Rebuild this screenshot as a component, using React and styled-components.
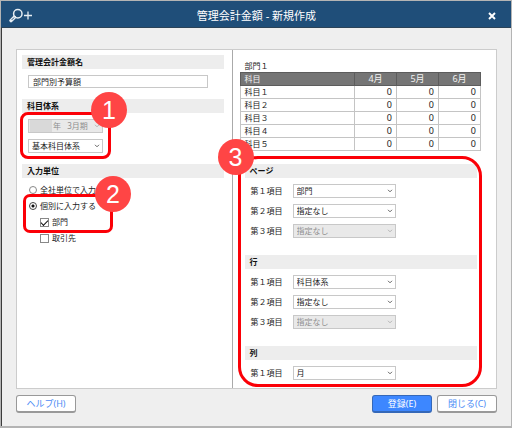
import React, { useState } from 'react';
import styled, { createGlobalStyle } from 'styled-components';

const GlobalStyle = createGlobalStyle`
  * {
    box-sizing: border-box;
  }

  body {
    margin: 0;
    background: #efefef;
  }

  body, input, select, button {
    font-family: 'Noto Sans', 'Noto Sans CJK JP', sans-serif;
    font-size: 8px;
    line-height: 12px;
    color: #222;
  }
`;

const months = ['4月', '5月', '6月'];
const accounts = ['科目１', '科目２', '科目３', '科目４', '科目５'];

const itemGroups = [
  {
    title: 'ページ',
    items: [
      { label: '第１項目', value: '部門' },
      { label: '第２項目', value: '指定なし' },
      { label: '第３項目', value: '指定なし', disabled: true },
    ],
  },
  {
    title: '行',
    items: [
      { label: '第１項目', value: '科目体系' },
      { label: '第２項目', value: '指定なし' },
      { label: '第３項目', value: '指定なし', disabled: true },
    ],
  },
  {
    title: '列',
    items: [{ label: '第１項目', value: '月' }],
  },
];

const SearchPlusIcon = () => (
  <svg width="24" height="16" viewBox="0 0 24 16" fill="none" aria-hidden="true">
    <circle cx="8.8" cy="5.8" r="4.2" stroke="#e6edf3" strokeWidth="1.5" />
    <path d="M5.4 9.2L2 12.6" stroke="#e6edf3" strokeWidth="3.4" strokeLinecap="round" />
    <path d="M4.8 9.8L3 11.6" stroke="#1f4e79" strokeWidth="1" strokeLinecap="round" />
    <path d="M15 7.5H23M19 3.5V11.5" stroke="#e6edf3" strokeWidth="1.3" />
  </svg>
);

const CloseIcon = () => (
  <svg width="8" height="8" viewBox="0 0 8 8" aria-hidden="true">
    <path d="M1 1L7 7M7 1L1 7" stroke="#fff" strokeWidth="1.9" />
  </svg>
);

const Dropdown = ({ id, value, disabled, label, masked }) => (
  <SelectBox>
    <Select id={id} disabled={disabled} aria-label={label} $masked={masked}>
      <option>{value}</option>
    </Select>
    {masked && <Mask />}
    <Chevron viewBox="0 0 6 4" $disabled={disabled}>
      <path d="M1 0.8L3 2.8L5 0.8" fill="none" stroke="currentColor" />
    </Chevron>
  </SelectBox>
);

const App = () => {
  const [name, setName] = useState('部門別予算額');
  const [unit, setUnit] = useState('each');
  const [byDivision, setByDivision] = useState(true);
  const [byClient, setByClient] = useState(false);

  return (
    <>
      <GlobalStyle />
      <Window>
        <TitleBar>
          <SearchPlusIcon />
          <Title>管理会計金額 - 新規作成</Title>
          <CloseButton type="button" aria-label="close">
            <CloseIcon />
          </CloseButton>
        </TitleBar>
        <Body>
          <Panels>
            <LeftPanel>
              <SectionTitle as="label" htmlFor="budget-name">管理会計金額名</SectionTitle>
              <NameInput id="budget-name" value={name} onChange={(e) => setName(e.target.value)} />

              <SectionTitle>科目体系</SectionTitle>
              <SystemGroup>
                <Dropdown value={'年\u00a0\u00a0\u00a03月期'} label="期" disabled masked />
                <Dropdown value="基本科目体系" label="科目体系" />
                <SystemRing />
                <SystemBadge>1</SystemBadge>
              </SystemGroup>

              <SectionTitle>入力単位</SectionTitle>
              <UnitGroup>
                <Choice>
                  <Radio name="unit" checked={unit === 'all'} onChange={() => setUnit('all')} />
                  全社単位で入力
                </Choice>
                <EachGroup>
                  <Choice>
                    <Radio name="unit" checked={unit === 'each'} onChange={() => setUnit('each')} />
                    個別に入力する
                  </Choice>
                  <Choice $nested>
                    <Check checked={byDivision} onChange={() => setByDivision(!byDivision)} />
                    部門
                  </Choice>
                  <EachRing />
                  <EachBadge>2</EachBadge>
                </EachGroup>
                <Choice $nested>
                  <Check checked={byClient} onChange={() => setByClient(!byClient)} />
                  取引先
                </Choice>
              </UnitGroup>
            </LeftPanel>

            <RightPanel>
              <Preview>
                <caption>部門１</caption>
                <thead>
                  <tr>
                    <th>科目</th>
                    {months.map((month) => <th key={month}>{month}</th>)}
                  </tr>
                </thead>
                <tbody>
                  {accounts.map((account) => (
                    <tr key={account}>
                      <td>{account}</td>
                      {months.map((month) => <td key={month}>0</td>)}
                    </tr>
                  ))}
                </tbody>
              </Preview>

              <ItemArea>
                {itemGroups.map((group, g) => (
                  <section key={group.title}>
                    <SectionTitle>{group.title}</SectionTitle>
                    <ItemRows>
                      {group.items.map((item, i) => (
                        <ItemRow key={item.label}>
                          <label htmlFor={`item-${g}-${i}`}>{item.label}</label>
                          <Dropdown id={`item-${g}-${i}`} value={item.value} disabled={item.disabled} />
                        </ItemRow>
                      ))}
                    </ItemRows>
                  </section>
                ))}
                <ItemRing />
                <ItemBadge>3</ItemBadge>
              </ItemArea>
            </RightPanel>
          </Panels>

          <Footer>
            <Button type="button">ヘルプ(H)</Button>
            <Actions>
              <Button type="button" $primary>登録(E)</Button>
              <Button type="button">閉じる(C)</Button>
            </Actions>
          </Footer>
        </Body>
      </Window>
    </>
  );
};

const Window = styled.div`
  display: flex;
  flex-direction: column;
  min-height: 100vh;
  border: 1px solid #b4b4b4;
  border-bottom-width: 2px;
  background: #efefef;
`;

const TitleBar = styled.header`
  display: grid;
  grid-template-columns: 24px 1fr 24px;
  align-items: center;
  height: 27px;
  padding: 3px 7px 0 8px;
  background: #1f4e79;
  border-bottom: 1px solid #2b4358;
`;

const Title = styled.h1`
  margin: 0;
  font-size: 11px;
  font-weight: 400;
  line-height: 16px;
  text-align: center;
  color: #fff;
`;

const CloseButton = styled.button`
  display: flex;
  justify-content: center;
  padding: 4px;
  border: 0;
  background: none;
`;

const Body = styled.main`
  display: flex;
  flex: 1;
  flex-direction: column;
  padding: 21px 14px 13px;
  border-left: 1px solid #3c3c3c;
`;

const Panels = styled.div`
  display: grid;
  flex: 1;
  grid-template-columns: 9fr 11fr;
  background: #fff;
  border: 1px solid #ccc;
`;

const LeftPanel = styled.section`
  display: flex;
  flex-direction: column;
  padding: 5px 8px 5px 5px;
  border-right: 1px solid #aaa;
`;

const RightPanel = styled.section`
  padding: 9px 15px 8px 7px;
`;

const SectionTitle = styled.h2`
  display: block;
  margin: 0;
  padding: 1px 5px;
  font-size: 8px;
  font-weight: 700;
  line-height: 12px;
  background: #ededed;
  color: #111;
`;

const NameInput = styled.input`
  width: 180px;
  height: 13px;
  margin: 6px 6px 11px;
  padding: 0 4px;
  border: 1px solid #c8c8c8;
  background: #fff;
`;

const SystemGroup = styled.div`
  position: relative;
  display: flex;
  flex-direction: column;
  gap: 6px;
  width: 75px;
  margin: 6px 6px 11px;
`;

const SelectBox = styled.div`
  position: relative;
`;

const Select = styled.select`
  display: block;
  appearance: none;
  width: 100%;
  height: 14px;
  padding: 0 12px 0 ${(p) => (p.$masked ? '24px' : '3px')};
  border: 1px solid #c8c8c8;
  border-radius: 0;
  background: #fff;

  &:disabled {
    background: #e9e9e9;
    color: #8f8f8f;
    opacity: 1;
  }
`;

const Mask = styled.span`
  position: absolute;
  top: 1px;
  bottom: 1px;
  left: 2px;
  width: 22px;
  background: #d9d9d9;
`;

const Chevron = styled.svg`
  position: absolute;
  top: 5px;
  right: 3px;
  width: 6px;
  height: 4px;
  color: ${(p) => (p.$disabled ? '#b5b5b5' : '#666')};
  pointer-events: none;
`;

const UnitGroup = styled.div`
  display: flex;
  flex-direction: column;
  align-items: flex-start;
  margin: 4px 7px;
`;

const EachGroup = styled.div`
  position: relative;
`;

const Choice = styled.label`
  display: flex;
  align-items: center;
  gap: 3px;
  height: 16px;
  padding-left: ${(p) => (p.$nested ? '11px' : '0')};
`;

const Radio = styled.input.attrs({ type: 'radio' })`
  appearance: none;
  width: 8px;
  height: 8px;
  margin: 0;
  border: 1px solid #888;
  border-radius: 50%;
  background: #fff;

  &:checked {
    background: radial-gradient(circle, #111 0 1px, #fff 2px);
    border-color: #444;
  }
`;

const Check = styled.input.attrs({ type: 'checkbox' })`
  appearance: none;
  display: grid;
  place-items: center;
  width: 9px;
  height: 9px;
  margin: 0;
  border: 1px solid #888;
  background: #fff;

  &:checked::before {
    content: '';
    width: 6px;
    height: 3px;
    border: solid #111;
    border-width: 0 0 1px 1px;
    transform: rotate(-45deg);
  }
`;

const Preview = styled.table`
  width: 100%;
  border-collapse: collapse;
  table-layout: fixed;

  caption {
    padding-left: 5px;
    line-height: 13px;
    text-align: left;
  }

  th, td {
    height: 13px;
    padding: 0 4px;
    border: 1px solid #c4c4c4;
    font-size: 9px;
    line-height: 12px;
    text-align: right;
  }

  th {
    background: #757575;
    border-color: #5c5c5c;
    color: #f2f2f2;
    font-weight: 400;
    text-align: center;
  }

  th:not(:first-child) {
    width: 42px;
  }

  th:first-child, td:first-child {
    font-size: 8px;
    text-align: left;
  }
`;

const ItemArea = styled.div`
  position: relative;
  display: flex;
  flex-direction: column;
  gap: 17px;
  margin: 13px 4px 0 5px;
`;

const ItemRows = styled.div`
  display: flex;
  flex-direction: column;
  gap: 6px;
  padding: 6px 6px 0;
`;

const ItemRow = styled.div`
  display: grid;
  grid-template-columns: 42px 103px;
  align-items: center;
`;

const Ring = styled.div`
  position: absolute;
  border: 3px solid #fb0007;
  pointer-events: none;
`;

const SystemRing = styled(Ring)`
  inset: -7px -8px -6px;
  border-radius: 8px;
`;

const EachRing = styled(Ring)`
  top: -4px;
  bottom: -3px;
  left: -6px;
  width: 90px;
  border-radius: 7px;
`;

const ItemRing = styled(Ring)`
  inset: -8px -5px -7px -7px;
  border-radius: 20px;
`;

const Badge = styled.span`
  position: absolute;
  width: 36px;
  height: 36px;
  border-radius: 50%;
  background: #ff4545;
  color: #fff;
  font-family: 'Liberation Sans', Arial, sans-serif;
  font-size: 25px;
  line-height: 36px;
  text-align: center;
`;

const SystemBadge = styled(Badge)`
  top: -27px;
  right: -24px;
`;

const EachBadge = styled(Badge)`
  top: -22px;
  left: 66px;
`;

const ItemBadge = styled(Badge)`
  top: -25px;
  left: -27px;
`;

const Footer = styled.footer`
  display: flex;
  justify-content: space-between;
  padding-top: 6px;
`;

const Actions = styled.div`
  display: flex;
  gap: 5px;
`;

const Button = styled.button`
  width: 60px;
  height: 18px;
  padding: 0;
  border: 1px solid ${(p) => (p.$primary ? '#3568b8' : '#999')};
  border-bottom-width: 2px;
  border-radius: 3px;
  background: ${(p) => (p.$primary ? '#3d87ff' : '#fff')};
  color: ${(p) => (p.$primary ? '#fff' : '#4d8cf5')};
  font-size: 9px;
`;

export default App;
